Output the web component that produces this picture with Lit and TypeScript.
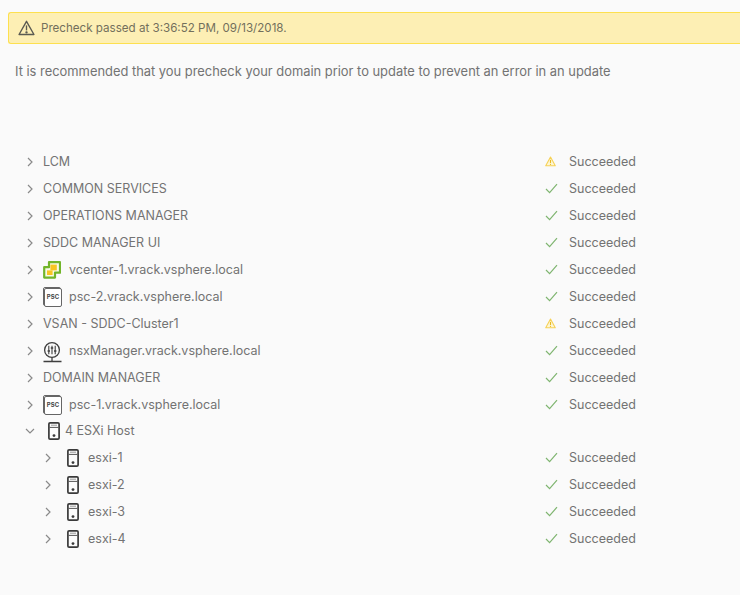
import { LitElement, html, css, svg } from "lit";
import { customElement } from "lit/decorators.js";

type Row = { label: string; depth: number; icon?: string; status?: string; open?: boolean };

const rows: Row[] = [
  { label: "LCM", depth: 0, status: "warn" },
  { label: "COMMON SERVICES", depth: 0, status: "ok" },
  { label: "OPERATIONS MANAGER", depth: 0, status: "ok" },
  { label: "SDDC MANAGER UI", depth: 0, status: "ok" },
  { label: "vcenter-1.vrack.vsphere.local", depth: 0, icon: "vc", status: "ok" },
  { label: "psc-2.vrack.vsphere.local", depth: 0, icon: "psc", status: "ok" },
  { label: "VSAN - SDDC-Cluster1", depth: 0, status: "warn" },
  { label: "nsxManager.vrack.vsphere.local", depth: 0, icon: "nsx", status: "ok" },
  { label: "DOMAIN MANAGER", depth: 0, status: "ok" },
  { label: "psc-1.vrack.vsphere.local", depth: 0, icon: "psc", status: "ok" },
];

const hostRows: Row[] = [
  { label: "4 ESXi Host", depth: 0, icon: "host", open: true },
  { label: "esxi-1", depth: 1, icon: "host", status: "ok" },
  { label: "esxi-2", depth: 1, icon: "host", status: "ok" },
  { label: "esxi-3", depth: 1, icon: "host", status: "ok" },
  { label: "esxi-4", depth: 1, icon: "host", status: "ok" },
];

const chevron = (open?: boolean) => html`<svg class="chev" width="10" height="10" viewBox="0 0 10 10" fill="none" stroke="#8a8a8a" stroke-width="1.2">
  ${open ? svg`<path d="M1 3 L5 7 L9 3"/>` : svg`<path d="M3 1 L7 5 L3 9"/>`}
</svg>`;

const icons: Record<string, () => unknown> = {
  vc: () => html`<svg width="18" height="18" viewBox="0 0 18 18">
    <path d="M6 1.2 H17 V11.6 H12 V16.6 H1.2 V6.2 H6 Z" fill="#f8fae6" stroke="#72b52a" stroke-width="2.2" stroke-linejoin="round"/>
    <rect x="7.4" y="3.6" width="6.4" height="5.8" fill="#f8c522"/>
    <rect x="4" y="9.4" width="5.6" height="4.6" fill="#f8c522"/>
  </svg>`,
  psc: () => html`<span class="psc">PSC</span>`,
  nsx: () => html`<svg class="tall" width="20" height="22" viewBox="0 0 20 22" fill="none" stroke="#3f3f3f" stroke-width="1.3">
    <circle cx="9" cy="9" r="7.4"/>
    <path d="M5.8 4.8 V13.2 M9 4.8 V13.2 M12.2 4.8 V13.2" stroke-width="1.1"/>
    <path d="M4.6 10 H7 M7.8 7 H10.2 M11 10 H13.4" stroke-width="1.7"/>
    <path d="M9 16.4 V20.5 M0.5 20.5 H18.5"/>
  </svg>`,
  host: () => html`<svg width="12" height="18" viewBox="0 0 12 18" fill="none">
    <rect x="0.9" y="0.9" width="10.2" height="16.2" rx="1.2" fill="#fcfcfc" stroke="#3a3a3a" stroke-width="1.7"/>
    <path d="M1.5 5.4 H10.5" stroke="#555" stroke-width="1"/>
    <path d="M3 3.2 H9" stroke="#999" stroke-width="1"/>
    <circle cx="6" cy="13.6" r="1.4" fill="#3a3a3a"/>
  </svg>`,
};

const statusIcon = (s: string) =>
  s === "warn"
    ? html`<svg width="11" height="11" viewBox="0 0 12 12" fill="none">
        <path d="M6 1.2 L11.2 10.6 H0.8 Z" fill="#fdf6d4" stroke="#f6d155" stroke-width="1.2" stroke-linejoin="round"/>
        <path d="M6 4.2 V7.6" stroke="#e8b820" stroke-width="1.2"/>
        <circle cx="6" cy="9.1" r="0.7" fill="#e8b820"/>
      </svg>`
    : html`<svg width="13" height="11" viewBox="0 0 13 11" fill="none">
        <path d="M1 6 L4.6 9.6 L12 1.2" stroke="#7fb570" stroke-width="1.2"/>
      </svg>`;

const renderRow = (r: Row) => html`<div class="row">
  <div class="tree ${r.depth ? "d1" : ""}">
    ${chevron(r.open)}
    ${r.icon ? html`<span class="icon ${r.icon}">${icons[r.icon]()}</span>` : null}
    <span>${r.label}</span>
  </div>
  ${r.status
    ? html`<div class="status">
        <span class="mark">${statusIcon(r.status)}</span>
        <span>Succeeded</span>
      </div>`
    : null}
</div>`;

@customElement("app-root")
export class AppRoot extends LitElement {
  static styles = css`
    :host {
      display: block;
      width: 740px;
      height: 595px;
      overflow: hidden;
      background: #fafafa;
      font-family: "Inter", "Noto Sans", sans-serif;
      font-size: 12.5px;
      color: #737373;
    }
    .page {
      padding-top: 12px;
    }
    .banner {
      margin-left: 8px;
      height: 32px;
      box-sizing: border-box;
      display: flex;
      align-items: center;
      gap: 6px;
      padding-left: 9px;
      background: #fdefb4;
      border: 1px solid #fde04f;
      border-right: none;
      border-radius: 3px 0 0 3px;
      font-size: 11.6px;
      color: #736f5c;
    }
    .intro {
      margin: 20px 0 0 15px;
      line-height: 16px;
      font-size: 12.9px;
    }
    .list {
      margin-top: 68px;
    }
    .hosts {
      margin-top: -1px;
    }
    .row {
      height: 27px;
      display: flex;
      align-items: center;
    }
    .tree {
      display: flex;
      align-items: center;
      width: 545px;
      flex: none;
      box-sizing: border-box;
      padding-left: 25px;
    }
    .tree.d1 {
      padding-left: 43px;
    }
    .chev {
      flex: none;
      width: 10px;
      margin-right: 8px;
    }
    .icon {
      flex: none;
      display: flex;
      align-items: flex-start;
      width: 18px;
      height: 18px;
      margin-right: 8px;
    }
    .icon.host {
      margin: 0 5px;
      width: 12px;
    }
    .tree.d1 .icon.host {
      margin: 0 9px 0 6px;
    }
    .tall {
      margin-top: -1px;
      flex: none;
    }
    .psc {
      box-sizing: border-box;
      flex: none;
      width: 18px;
      height: 19px;
      border: 1.5px solid #666;
      border-radius: 2px;
      background: #fff;
      font-size: 6px;
      font-weight: 700;
      line-height: 16px;
      text-align: center;
      color: #444;
    }
    .status {
      display: flex;
      align-items: center;
    }
    .mark {
      width: 24px;
      display: flex;
      align-items: center;
      flex: none;
    }
  `;

  render() {
    return html`<div class="page">
      <div class="banner">
        <svg width="17" height="16" viewBox="0 0 16 15" fill="none" stroke="#5a5a52" stroke-width="1.3">
          <path d="M8 1.2 L15 13.6 H1 Z" stroke-linejoin="round"/>
          <path d="M8 5 V9.8"/>
          <circle cx="8" cy="11.6" r="0.5" fill="#5a5a52"/>
        </svg>
        <span>Precheck passed at 3:36:52 PM, 09/13/2018.</span>
      </div>
      <div class="intro">It is recommended that you precheck your domain prior to update to prevent an error in an update</div>
      <div class="list">${rows.map(renderRow)}</div>
      <div class="hosts">${hostRows.map(renderRow)}</div>
    </div>`;
  }
}
